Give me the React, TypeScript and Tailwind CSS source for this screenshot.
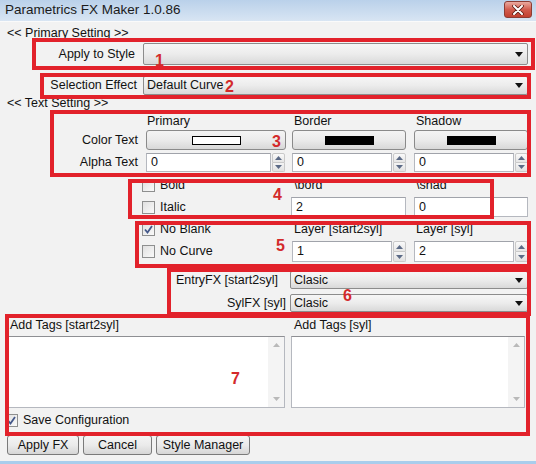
import React from "react";

function Arrow() {
  return (
    <svg width="8" height="5" viewBox="0 0 8 5" className="shrink-0">
      <path d="M0 0 L8 0 L4 5 Z" fill="#111" />
    </svg>
  );
}

function Combo({ text, h, w }: { text?: string; h: string; w: string }) {
  return (
    <div
      className={`${h} ${w} flex items-center rounded-[2px] border border-[#8c8c8c] bg-gradient-to-b from-[#f6f6f6] via-[#ececec] to-[#d9d9d9] pl-[3px] pr-[4px]`}
    >
      <span className="flex-1 leading-none">{text}</span>
      <Arrow />
    </div>
  );
}

function SpinArrows() {
  return (
    <div className="flex h-full w-[13px] flex-col">
      <div className="flex flex-1 items-center justify-center rounded-t-[2px] border border-[#c9c9c9] bg-gradient-to-b from-[#fafafa] to-[#e6e6e6]">
        <svg width="7" height="4" viewBox="0 0 7 4">
          <path d="M0 4 L3.5 0 L7 4 Z" fill="#5b6a86" />
        </svg>
      </div>
      <div className="flex flex-1 items-center justify-center rounded-b-[2px] border border-t-0 border-[#c9c9c9] bg-gradient-to-b from-[#f4f4f4] to-[#e2e2e2]">
        <svg width="7" height="4" viewBox="0 0 7 4">
          <path d="M0 0 L3.5 4 L7 0 Z" fill="#5b6a86" />
        </svg>
      </div>
    </div>
  );
}

function Spin({ value, inputW }: { value: string; inputW: string }) {
  return (
    <div className="flex h-full items-stretch gap-[1px]">
      <div className={`${inputW} flex items-center border border-[#b5b8bf] border-t-[#a0a3aa] bg-white pl-[4px]`}>
        {value}
      </div>
      <SpinArrows />
    </div>
  );
}

function Field({ value, w }: { value: string; w: string }) {
  return (
    <div className={`${w} flex h-full items-center border border-[#b5b8bf] border-t-[#a0a3aa] bg-white pl-[4px]`}>
      {value}
    </div>
  );
}

function Check({ checked }: { checked?: boolean }) {
  return (
    <div className="flex h-[13px] w-[13px] shrink-0 items-center justify-center border border-[#8e8f8f] bg-white">
      <div className="flex h-[11px] w-[11px] items-center justify-center bg-gradient-to-br from-[#e0e0e0] to-[#fafafa]">
        {checked && (
          <svg width="9" height="9" viewBox="0 0 9 9">
            <path d="M1 4.5 L3.5 7.5 L8 1" fill="none" stroke="#44588a" strokeWidth="1.8" />
          </svg>
        )}
      </div>
    </div>
  );
}

function ColorBtn({ w, swatch }: { w: string; swatch: "white" | "black" }) {
  return (
    <div
      className={`${w} flex h-full items-center justify-center rounded-[3px] border border-[#8a8a8a] bg-gradient-to-b from-[#f4f4f4] via-[#ebebeb] to-[#d8d8d8]`}
    >
      <div
        className={`h-[9px] w-[49px] border border-black ${swatch === "white" ? "bg-white" : "bg-black"}`}
      />
    </div>
  );
}

function Btn({ text, w }: { text: string; w: string }) {
  return (
    <div
      className={`${w} flex h-full items-center justify-center rounded-[3px] border border-[#7a7a7a] bg-gradient-to-b from-[#f4f4f4] via-[#ebebeb] to-[#d6d6d6]`}
    >
      {text}
    </div>
  );
}

function TextArea({ w }: { w: string }) {
  return (
    <div className={`${w} flex h-full border border-[#b5b8bf] border-t-[#8e8f93] bg-white`}>
      <div className="flex-1" />
      <div className="flex w-[16px] flex-col items-center justify-between bg-[#f4f4f4] py-[6px]">
        <svg width="7" height="4" viewBox="0 0 7 4">
          <path d="M0 4 L3.5 0 L7 4 Z" fill="#b9b9b9" />
        </svg>
        <svg width="7" height="4" viewBox="0 0 7 4">
          <path d="M0 0 L3.5 4 L7 0 Z" fill="#b9b9b9" />
        </svg>
      </div>
    </div>
  );
}

function RedBox({ cls }: { cls: string }) {
  return <div className={`pointer-events-none absolute border-[4px] border-[#e2222b] ${cls}`} />;
}

function Num({ n, cls }: { n: string; cls: string }) {
  return (
    <div className={`pointer-events-none absolute text-[16px] font-bold leading-none text-[#d32a2b] ${cls}`}>
      {n}
    </div>
  );
}

export default function App() {
  return (
    <div className="relative flex h-[464px] w-[536px] flex-col overflow-hidden border-b-[3px] border-[#a9cdec] bg-[#f2f2f2] font-['Liberation_Sans',Arial,sans-serif] text-[12.5px] text-[#111]">
      {/* Title bar */}
      <div className="flex h-[21px] shrink-0 items-center bg-gradient-to-b from-[#bad1ea] to-[#d8e5f3] pl-[5px]">
        <span className="flex-1 text-[13.5px] text-[#1b1b1b]">Parametrics FX Maker 1.0.86</span>
        <div className="mr-[4px] mt-[1px] flex h-[17px] w-[28px] items-center justify-center self-start rounded-[3px] border border-[#8d3c33] bg-gradient-to-b from-[#e9aaa0] via-[#d25c4e] to-[#c2402f]">
          <svg width="12" height="10" viewBox="0 0 12 10">
            <path d="M2 1 L10 9 M10 1 L2 9" stroke="#5a1c14" strokeWidth="3.6" strokeLinecap="round" />
            <path d="M2 1 L10 9 M10 1 L2 9" stroke="#ffffff" strokeWidth="2" strokeLinecap="round" />
          </svg>
        </div>
      </div>
      <div className="h-[1px] bg-[#fafafa]" />

      {/* Primary Setting */}
      <div className="mt-[4px] h-[14px] pl-[7px] leading-[14px]">&lt;&lt; Primary Setting &gt;&gt;</div>

      <div className="mt-[3px] flex h-[22px] items-center">
        <div className="w-[143px] pr-[8px] text-right">Apply to Style</div>
        <Combo h="h-[22px]" w="w-[385px]" />
      </div>

      <div className="mt-[11px] flex h-[19px] items-center">
        <div className="w-[143px] pr-[6px] text-right">Selection Effect</div>
        <Combo h="h-[19px]" w="w-[385px]" text="Default Curve" />
      </div>

      <div className="mt-[1px] h-[14px] pl-[7px] leading-[14px]">&lt;&lt; Text Setting &gt;&gt;</div>

      {/* headers */}
      <div className="mt-[4px] flex h-[14px] items-center">
        <div className="w-[146px]" />
        <div className="w-[146px] pl-[1px]">Primary</div>
        <div className="w-[122px] pl-[2px]">Border</div>
        <div className="w-[114px] pl-[2px]">Shadow</div>
      </div>

      <div className="mt-[2px] flex h-[20px] items-center">
        <div className="w-[146px] pr-[8px] text-right">Color Text</div>
        <div className="h-full w-[146px]"><ColorBtn w="w-[140px]" swatch="white" /></div>
        <div className="h-full w-[122px]"><ColorBtn w="w-[114px]" swatch="black" /></div>
        <div className="h-full w-[114px]"><ColorBtn w="w-[114px]" swatch="black" /></div>
      </div>

      <div className="mt-[3px] flex h-[19px] items-center">
        <div className="w-[146px] pr-[8px] text-right">Alpha Text</div>
        <div className="h-full w-[146px]"><Spin value="0" inputW="w-[125px]" /></div>
        <div className="h-full w-[122px]"><Spin value="0" inputW="w-[100px]" /></div>
        <div className="h-full w-[114px]"><Spin value="0" inputW="w-[100px]" /></div>
      </div>

      {/* Bold / bord */}
      <div className="mt-[6px] flex h-[15px] items-center">
        <div className="flex w-[292px] items-center pl-[142px]">
          <Check />
          <span className="ml-[5px]">Bold</span>
        </div>
        <div className="w-[122px] pl-[2px]">\bord</div>
        <div className="w-[114px] pl-[2px]">\shad</div>
      </div>

      <div className="mt-[4px] flex h-[20px] items-center">
        <div className="flex w-[291px] items-center pl-[142px]">
          <Check />
          <span className="ml-[5px]">Italic</span>
        </div>
        <div className="h-full w-[123px]"><Field value="2" w="w-[115px]" /></div>
        <div className="h-full w-[114px]"><Field value="0" w="w-[114px]" /></div>
      </div>

      {/* No Blank / Layer */}
      <div className="mt-[5px] flex h-[15px] items-center">
        <div className="flex w-[292px] items-center pl-[142px]">
          <Check checked />
          <span className="ml-[5px]">No Blank</span>
        </div>
        <div className="w-[122px] pl-[2px]">Layer [start2syl]</div>
        <div className="w-[114px] pl-[2px]">Layer [syl]</div>
      </div>

      <div className="mt-[4px] flex h-[21px] items-center">
        <div className="flex w-[292px] items-center pl-[142px]">
          <Check />
          <span className="ml-[5px]">No Curve</span>
        </div>
        <div className="h-full w-[122px]"><Spin value="1" inputW="w-[100px]" /></div>
        <div className="h-full w-[114px]"><Spin value="2" inputW="w-[100px]" /></div>
      </div>

      {/* FX combos */}
      <div className="mt-[9px] flex h-[18px] items-center">
        <div className="w-[290px] pr-[12px] text-right">EntryFX [start2syl]</div>
        <Combo h="h-[18px]" w="w-[238px]" text="Clasic" />
      </div>
      <div className="mt-[5px] flex h-[18px] items-center">
        <div className="w-[290px] pr-[4px] text-right">SylFX [syl]</div>
        <Combo h="h-[18px]" w="w-[238px]" text="Clasic" />
      </div>

      {/* Add tags */}
      <div className="mt-[6px] flex h-[15px] items-center">
        <div className="w-[292px] pl-[10px]">Add Tags [start2syl]</div>
        <div className="pl-[2px]">Add Tags [syl]</div>
      </div>
      <div className="mt-[3px] flex h-[72px]">
        <div className="h-full w-[291px] pl-[7px]"><TextArea w="w-[278px]" /></div>
        <TextArea w="w-[234px]" />
      </div>

      <div className="mt-[4px] flex h-[16px] items-center pl-[5px]">
        <Check checked />
        <span className="ml-[5px]">Save Configuration</span>
      </div>

      <div className="mt-[7px] flex h-[20px] items-center gap-[4px] pl-[7px]">
        <Btn text="Apply FX" w="w-[72px]" />
        <Btn text="Cancel" w="w-[69px]" />
        <Btn text="Style Manager" w="w-[94px]" />
      </div>

      {/* Annotation overlays */}
      <RedBox cls="left-[32px] top-[38px] w-[503px] h-[32px]" />
      <RedBox cls="left-[40px] top-[73px] w-[491px] h-[26px]" />
      <RedBox cls="left-[50px] top-[110px] w-[481px] h-[67px]" />
      <RedBox cls="left-[128px] top-[179px] w-[366px] h-[40px]" />
      <RedBox cls="left-[135px] top-[221px] w-[396px] h-[47px]" />
      <RedBox cls="left-[167px] top-[268px] w-[364px] h-[48px]" />
      <RedBox cls="left-[5px] top-[314px] w-[525px] h-[122px]" />

      <Num n="1" cls="left-[155px] top-[53px]" />
      <Num n="2" cls="left-[225px] top-[79px]" />
      <Num n="3" cls="left-[272px] top-[134px]" />
      <Num n="4" cls="left-[273px] top-[187px]" />
      <Num n="5" cls="left-[276px] top-[238px]" />
      <Num n="6" cls="left-[343px] top-[288px]" />
      <Num n="7" cls="left-[231px] top-[371px]" />
    </div>
  );
}
